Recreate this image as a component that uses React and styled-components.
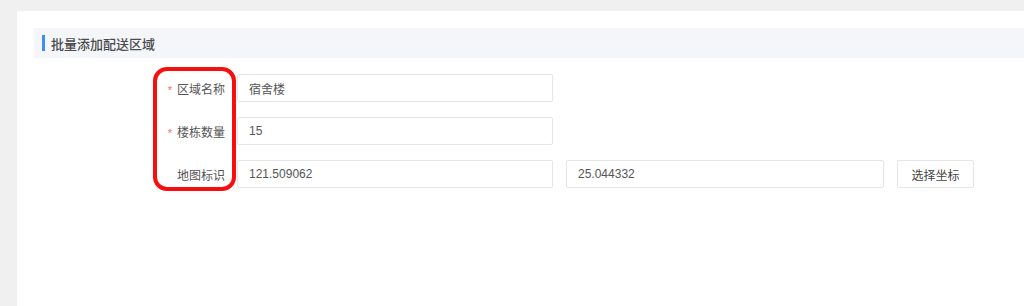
import React from 'react';
import styled, { createGlobalStyle } from 'styled-components';

const GlobalStyle = createGlobalStyle`
  html, body {
    margin: 0;
    padding: 0;
    background: #f0f0f0;
    font-family: "Helvetica Neue", "Liberation Sans", "Noto Sans CJK SC", sans-serif;
  }
`;

const Page = styled.div`
  height: 306px;
  padding: 11px 0 0 17px;
  box-sizing: border-box;
  overflow: hidden;
`;

const Panel = styled.div`
  background: #fff;
  height: 100%;
  padding: 17px 0 0 17px;
  box-sizing: border-box;
`;

const Header = styled.div`
  height: 30px;
  background: #f5f6fa;
  display: flex;
  align-items: center;
  padding-left: 8px;
`;

const TitleBar = styled.span`
  width: 3px;
  height: 16px;
  background: #3d8ef0;
  margin-right: 6px;
`;

const Title = styled.span`
  font-size: 13px;
  color: #4a4a4a;
  font-weight: 500;
`;

const Form = styled.div`
  position: relative;
  display: flex;
  flex-direction: column;
  gap: 15px;
  padding: 16px 0 0 91px;
`;

const Row = styled.div`
  display: flex;
  align-items: center;
  gap: 13px;
`;

const Label = styled.label`
  width: 100px;
  margin-right: -1px;
  text-align: right;
  font-size: 12px;
  color: #555;
  &::before {
    content: ${p => (p.$required ? '"*"' : '""')};
    color: #f56c6c;
    font-size: 11px;
    margin-right: 5px;
  }
`;

const Input = styled.div`
  width: ${p => p.$width}px;
  height: 28px;
  box-sizing: border-box;
  border: 1px solid #e4e6eb;
  border-radius: 2px;
  padding-left: 11px;
  display: flex;
  align-items: center;
  font-size: 12px;
  color: #555;
`;

const Button = styled.div`
  width: 77px;
  height: 28px;
  box-sizing: border-box;
  border: 1px solid #e4e6eb;
  border-radius: 2px;
  display: flex;
  align-items: center;
  justify-content: center;
  font-size: 12px;
  color: #444;
`;

const Highlight = styled.div`
  position: absolute;
  left: 119px;
  top: 9px;
  width: 83px;
  height: 124px;
  box-sizing: border-box;
  border: 4px solid #f50f0f;
  border-radius: 14px;
  pointer-events: none;
`;

export default function App() {
  return (
    <>
      <GlobalStyle />
      <Page>
        <Panel>
          <Header>
            <TitleBar />
            <Title>批量添加配送区域</Title>
          </Header>
          <Form>
            <Row>
              <Label $required>区域名称</Label>
              <Input $width={316}>宿舍楼</Input>
            </Row>
            <Row>
              <Label $required>楼栋数量</Label>
              <Input $width={316}>15</Input>
            </Row>
            <Row>
              <Label>地图标识</Label>
              <Input $width={316}>121.509062</Input>
              <Input $width={318}>25.044332</Input>
              <Button>选择坐标</Button>
            </Row>
            <Highlight />
          </Form>
        </Panel>
      </Page>
    </>
  );
}
